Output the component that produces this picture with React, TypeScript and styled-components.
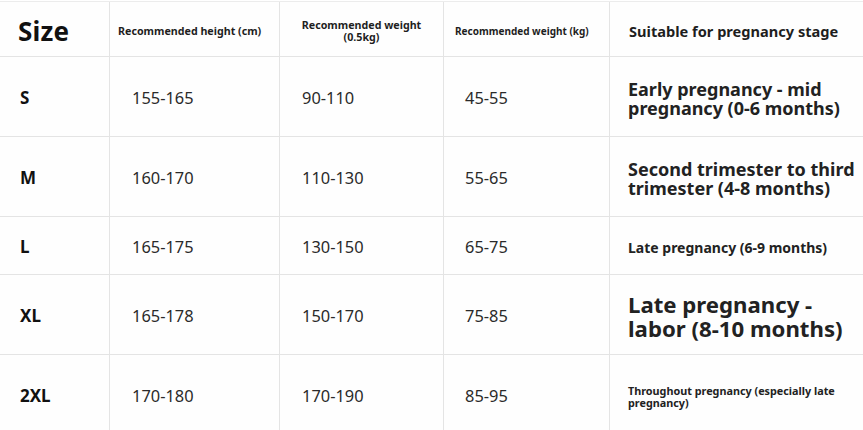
import styled, { createGlobalStyle } from "styled-components";

const GlobalStyle = createGlobalStyle`
  html, body {
    margin: 0;
    padding: 0;
    background: #ffffff;
  }
  body {
    font-family: "Noto Sans", "Open Sans", Arial, sans-serif;
    color: #222;
  }
`;

const Table = styled.div`
  width: 863px;
  height: 430px;
  overflow: hidden;
  display: grid;
  grid-template-columns: 110px 170px 164px 166px 1fr;
  grid-template-rows: 55px 80px 80px 58px 80px 80px;
  border-top: 1px solid #ececec;
  margin-top: 1px;
  background: #fefefe;
`;

const Cell = styled.div<{ $last?: boolean; $pl?: number; $center?: boolean }>`
  display: flex;
  align-items: center;
  justify-content: ${(p) => (p.$center ? "center" : "flex-start")};
  text-align: ${(p) => (p.$center ? "center" : "left")};
  padding-left: ${(p) => p.$pl ?? 0}px;
  border-right: ${(p) => (p.$last ? "none" : "1px solid #e4e4e4")};
  border-bottom: 1px solid #e4e4e4;
  box-sizing: border-box;
  min-width: 0;
`;

const SizeHead = styled.span`
  font-size: 26px;
  font-weight: 700;
  color: #111;
  letter-spacing: 0.2px;
  margin-top: 4px;
`;

const SmallHead = styled.span<{ $size: number }>`
  font-size: ${(p) => p.$size}px;
  font-weight: 700;
  line-height: 12px;
  color: #1e1e1e;
  margin-top: 3px;
  white-space: nowrap;
`;

const StageHead = styled.span`
  font-size: 14.6px;
  font-weight: 700;
  color: #1e1e1e;
  margin-top: 3px;
  white-space: nowrap;
`;

const SizeLabel = styled.span`
  font-size: 17px;
  font-weight: 700;
  color: #111;
  margin-top: 2px;
`;

const Value = styled.span`
  font-size: 16.4px;
  font-weight: 400;
  color: #2a2a2a;
  margin-top: 2px;
`;

const Stage = styled.div<{ $size: number; $lh: number }>`
  display: flex;
  flex-direction: column;
  font-size: ${(p) => p.$size}px;
  line-height: ${(p) => p.$lh}px;
  font-weight: 700;
  color: #222;
  margin-top: 4px;
  white-space: nowrap;
`;

type Row = {
  size: string;
  height: string;
  jin: string;
  kg: string;
  stage: string[];
  fs: number;
  lh: number;
};

const rows: Row[] = [
  { size: "S", height: "155-165", jin: "90-110", kg: "45-55", stage: ["Early pregnancy - mid", "pregnancy (0-6 months)"], fs: 18, lh: 19 },
  { size: "M", height: "160-170", jin: "110-130", kg: "55-65", stage: ["Second trimester to third", "trimester (4-8 months)"], fs: 18, lh: 19 },
  { size: "L", height: "165-175", jin: "130-150", kg: "65-75", stage: ["Late pregnancy (6-9 months)"], fs: 14, lh: 16 },
  { size: "XL", height: "165-178", jin: "150-170", kg: "75-85", stage: ["Late pregnancy -", "labor (8-10 months)"], fs: 22.2, lh: 24 },
  { size: "2XL", height: "170-180", jin: "170-190", kg: "85-95", stage: ["Throughout pregnancy (especially late", "pregnancy)"], fs: 10.8, lh: 12 },
];

export default function App() {
  return (
    <>
      <GlobalStyle />
      <Table>
        <Cell $pl={18}>
          <SizeHead>Size</SizeHead>
        </Cell>
        <Cell $pl={8}>
          <SmallHead $size={10.7}>Recommended height (cm)</SmallHead>
        </Cell>
        <Cell $center>
          <SmallHead $size={10.7}>
            Recommended weight
            <br />
            (0.5kg)
          </SmallHead>
        </Cell>
        <Cell $pl={11}>
          <SmallHead $size={10}>Recommended weight (kg)</SmallHead>
        </Cell>
        <Cell $pl={19} $last>
          <StageHead>Suitable for pregnancy stage</StageHead>
        </Cell>

        {rows.map((r) => (
          <>
            <Cell key={r.size + "s"} $pl={20}>
              <SizeLabel>{r.size}</SizeLabel>
            </Cell>
            <Cell key={r.size + "h"} $pl={22}>
              <Value>{r.height}</Value>
            </Cell>
            <Cell key={r.size + "j"} $pl={22}>
              <Value>{r.jin}</Value>
            </Cell>
            <Cell key={r.size + "k"} $pl={21}>
              <Value>{r.kg}</Value>
            </Cell>
            <Cell key={r.size + "t"} $pl={18} $last>
              <Stage $size={r.fs} $lh={r.lh}>
                {r.stage.map((line, i) => (
                  <span key={i}>{line}</span>
                ))}
              </Stage>
            </Cell>
          </>
        ))}
      </Table>
    </>
  );
}
